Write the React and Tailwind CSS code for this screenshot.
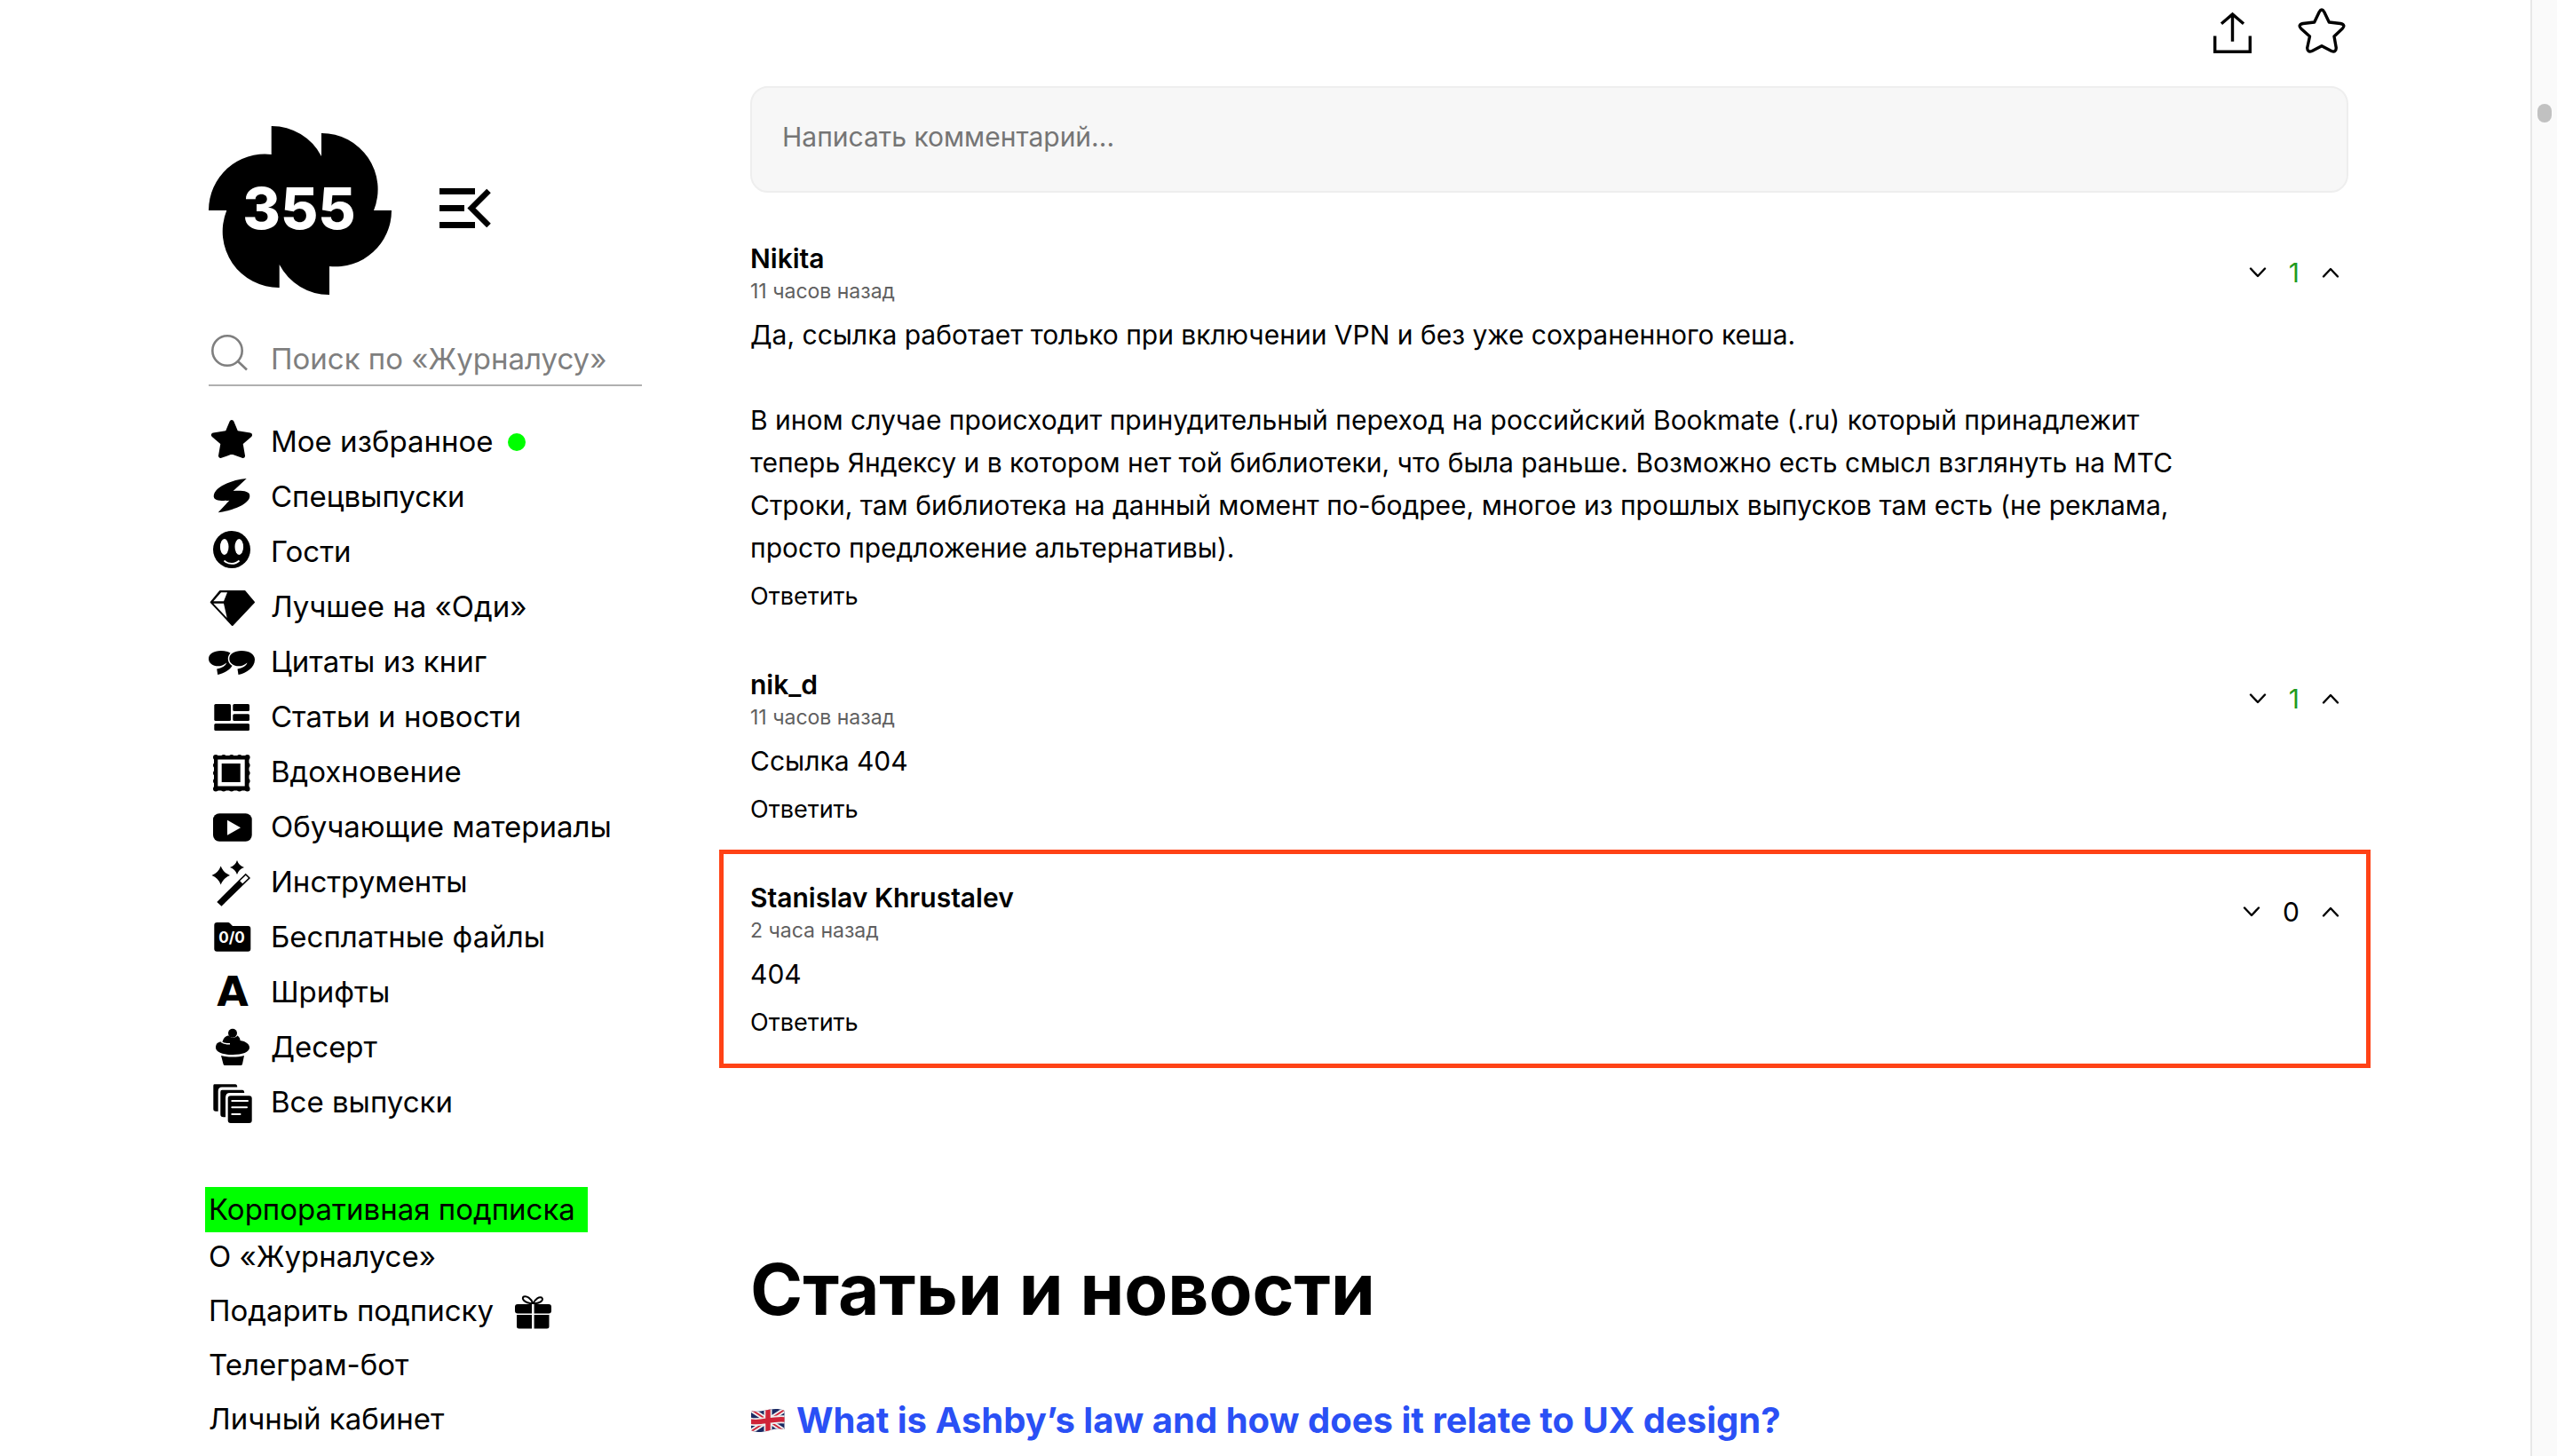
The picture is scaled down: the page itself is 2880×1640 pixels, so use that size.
import React, { useState } from "react";

const Logo = () => (
  <svg width="206" height="190" viewBox="0 0 206 190" role="img" aria-label="355">
    <path d="M70.7 0A63.3 63.3 0 0 1 127 34V8A63.3 63.3 0 0 1 186 95H206A63.3 63.3 0 0 1 136 158V190A63.3 63.3 0 0 1 79.7 156V182A63.3 63.3 0 0 1 20.3 95H0A63.3 63.3 0 0 1 70.7 32Z" />
    <text x="102" y="116" textAnchor="middle" className="fill-white text-[65px] font-extrabold">
      355
    </text>
  </svg>
);

const MenuIcon = () => (
  <svg width="58" height="52" viewBox="0 0 58 52">
    <path d="M0 1H40V8H0ZM0 20H28V27H0ZM0 39H40V46H0Z" />
    <path d="M55.5 4L36 23.5L55.5 43" fill="none" stroke="#000" strokeWidth="6.5" />
  </svg>
);

const SearchIcon = () => (
  <svg width="44" height="44" viewBox="0 0 44 44" fill="none" stroke="#7f7f7f" strokeWidth="2.6">
    <circle cx="21" cy="21" r="16.7" />
    <path d="M33 33L43 42.5" />
  </svg>
);

const ShareIcon = () => (
  <svg width="44" height="64" viewBox="0 0 44 64" fill="none" stroke="#000" strokeWidth="3.4">
    <path d="M21.5 16V46.7M9 26.7L21.5 16L34 26.7M1.7 40.5V58.3H41.3V40.5" />
  </svg>
);

const StarIcon = () => (
  <svg
    width="54"
    height="64"
    viewBox="0 0 54 64"
    fill="none"
    stroke="#000"
    strokeWidth="3.4"
    strokeLinejoin="round"
  >
    <path d="M24.2 13.5Q27 8.5 29.8 13.5L35.3 25L48 26.5Q54.5 28 50 32.5L41 41L43.3 54Q43 59.5 38 57.5L27 51.7L16 57.5Q11 59.5 10.7 54L13.5 41L4 32.5Q-.5 28 6 26.5L18.7 25Z" />
  </svg>
);

const GiftIcon = () => (
  <svg width="42" height="54" viewBox="0 0 42 54">
    <path
      d="M20.5 19.5C18 13 13 10.5 10 11.5C7 13 9.5 18.5 20.5 19.5C23 13.5 27.5 11.5 30 12.5C32.5 14.5 30.5 19 20.5 19.5"
      fill="none"
      stroke="#000"
      strokeWidth="2"
    />
    <rect y="20" width="41" height="10.5" rx="3" />
    <path d="M2 32H38.5V45Q38.5 47.5 36 47.5H4.5Q2 47.5 2 45Z" />
    <path d="M20.3 20V48" stroke="#fff" strokeWidth="2.6" />
  </svg>
);

const Flag = () => (
  <svg width="40" height="28" viewBox="0 0 40 28">
    <clipPath id="flag">
      <path d="M1 3C10 6 20 0 31 1Q36 1.5 38.5 3V24C28 21 20 27 9 27Q4 27 1 25Z" />
    </clipPath>
    <g clipPath="url(#flag)">
      <rect width="40" height="28" fill="#1b2a63" />
      <path d="M0 1L40 27M0 27L40 1" stroke="#eee" strokeWidth="5.5" />
      <path d="M0 1L40 27M0 27L40 1" stroke="#cf2338" strokeWidth="1.8" />
      <path d="M20 0V28M0 15C12 18 24 11 40 13" fill="none" stroke="#eee" strokeWidth="9" />
      <path d="M20 0V28M0 15C12 18 24 11 40 13" fill="none" stroke="#cf2338" strokeWidth="5.5" />
    </g>
  </svg>
);

const quote =
  "M37 18C46 18 52 22 52 28C52 37 42 43.5 33.5 45L32.5 38.5C38 37.5 42.5 35 43.5 31.5C40 34.5 37 35.3 34 35.3C28 35.3 23.3 32 23.3 27C23.3 21.5 29 18 37 18Z";

const navItems = [
  {
    label: "Мое избранное",
    isNew: true,
    icon: (
      <path
        d="M26 8.5L31 20.5L46.5 23L36 32L38.5 46.5L26 42L13.5 46.5L16 32L5.5 23L21 20.5Z"
        stroke="#000"
        strokeWidth="5"
        strokeLinejoin="round"
      />
    ),
  },
  {
    label: "Спецвыпуски",
    icon: (
      <path d="M42.7 10L27.7 24C38 23.5 46.3 24 46.3 29.5C46.3 39 27 46 10.7 48.3L23.3 34.7C14 35.5 5.7 35 5.7 30C5.7 20 25 11.5 42.7 10Z" />
    ),
  },
  {
    label: "Гости",
    icon: (
      <>
        <circle cx="26" cy="28" r="21" />
        <ellipse cx="17.7" cy="25" rx="4.8" ry="9" fill="#fff" />
        <ellipse cx="34.3" cy="25" rx="4.8" ry="9" fill="#fff" />
        <path d="M17.5 40.5C22 45 30 45 34.5 40.5" fill="none" stroke="#fff" strokeWidth="1.8" />
      </>
    ),
  },
  {
    label: "Лучшее на «Оди»",
    icon: (
      <>
        <path
          d="M2.7 25.3L13 13H40.5L51 25.3L26.7 51Z"
          stroke="#000"
          strokeWidth="2"
          strokeLinejoin="round"
        />
        <path d="M14 14.3H21L17 24.3H5.3ZM5.3 26.7H17L20.7 43Z" fill="#fff" />
      </>
    ),
  },
  {
    label: "Цитаты из книг",
    icon: (
      <>
        <path d={quote} transform="translate(-23.3 0)" />
        <path d={quote} stroke="#fff" strokeWidth="3" className="[paint-order:stroke]" />
      </>
    ),
  },
  {
    label: "Статьи и новости",
    icon: (
      <>
        <rect x="6.3" y="16" width="18.7" height="19" rx="1.5" />
        <rect x="27.3" y="16" width="18.7" height="8" rx="1.5" />
        <rect x="27.3" y="27.3" width="18.7" height="7.7" rx="1.5" />
        <rect x="6.3" y="38" width="39.7" height="8" rx="1.5" />
      </>
    ),
  },
  {
    label: "Вдохновение",
    icon: (
      <>
        <rect x="6" y="12" width="39.5" height="39.5" />
        <rect
          x="8"
          y="14"
          width="35.6"
          height="35.6"
          fill="none"
          stroke="#000"
          strokeWidth="6"
          strokeLinecap="round"
          strokeDasharray="0 8.9"
        />
        <rect x="10.3" y="16.5" width="30.4" height="30" fill="#fff" />
        <rect x="14.7" y="21" width="21" height="21" />
      </>
    ),
  },
  {
    label: "Обучающие материалы",
    icon: (
      <>
        <rect x="5" y="15.3" width="43.7" height="31.4" rx="7" />
        <path d="M21 22.7L36 31.3L21 39.7Z" fill="#fff" />
      </>
    ),
  },
  {
    label: "Инструменты",
    icon: (
      <>
        <path d="M13.7 12.5Q16.5 20 24 23Q16.5 26 13.7 33.5Q11 26 3.5 23Q11 20 13.7 12.5Z" />
        <path d="M32 6Q34 12 40 14Q34 16 32 22Q30 16 24 14Q30 12 32 6Z" />
        <path d="M41.7 20.7L47 26L14.5 57.7L9.3 53Z" />
        <path d="M41.8 23L44.8 26L38.2 32.3L35.2 29.3Z" fill="#fff" />
      </>
    ),
  },
  {
    label: "Бесплатные файлы",
    icon: (
      <>
        <path d="M9.5 14H22Q23 14 24 15L27 18H44.5Q47.3 18 47.3 21V43.7Q47.3 46.7 44.3 46.7H9.3Q6.3 46.7 6.3 43.7V17Q6.3 14 9.5 14Z" />
        <text x="26" y="37" textAnchor="middle" className="fill-white text-[17px] font-bold">
          0/0
        </text>
      </>
    ),
  },
  {
    label: "Шрифты",
    icon: (
      <text
        x="27"
        y="46"
        textAnchor="middle"
        className="font-['DejaVu_Sans',sans-serif] text-[46px] font-bold"
      >
        A
      </text>
    ),
  },
  {
    label: "Десерт",
    icon: (
      <>
        <path d="M8 31C8 26 11 24 15.5 24.5C17 19 20 17.5 23 17.5C25 20.5 30 20.5 32.5 17.5C34.5 19 35.5 20.5 35.5 23C42 24 46 27 46 31C46 36 38 39 27 39C16 39 8 36 8 31Z" />
        <path d="M14 24.5C17 26.5 20 27 24 26.7" fill="none" stroke="#fff" strokeWidth="1.5" />
        <circle cx="27" cy="14.7" r="5" />
        <path d="M14 40C22 42 32 42 40 40L38 49.5Q37.7 51 36 51H18.5Q16.7 51 16.5 49.5Z" />
      </>
    ),
  },
  {
    label: "Все выпуски",
    icon: (
      <g stroke="#fff" strokeWidth="2">
        <path d="M6.3 9.3H30Q33.3 9.3 33.3 14.5H15Q11.7 14.5 11.7 18V41.7H8Q4.3 41.7 4.3 38V12Q4.3 9.3 6.3 9.3Z" />
        <path d="M15 15.7H38Q41.3 15.7 41.3 21H24Q20 21 20 25V48.3H16.5Q12.3 48.3 12.3 44V19Q12.3 15.7 15 15.7Z" />
        <rect x="20.7" y="22.3" width="29" height="32.7" rx="4" />
        <path d="M26.3 29H44M26.3 36.3H43M26.3 44H35.5" strokeLinecap="round" />
      </g>
    ),
  },
];

const comments = [
  {
    author: "Nikita",
    time: "11 часов назад",
    votes: 1,
    text: "Да, ссылка работает только при включении VPN и без уже сохраненного кеша.\n\nВ ином случае происходит принудительный переход на российский Bookmate (.ru) который принадлежит теперь Яндексу и в котором нет той библиотеки, что была раньше. Возможно есть смысл взглянуть на МТС Строки, там библиотека на данный момент по-бодрее, многое из прошлых выпусков там есть (не реклама, просто предложение альтернативы).",
  },
  { author: "nik_d", time: "11 часов назад", votes: 1, text: "Ссылка 404" },
  {
    author: "Stanislav Khrustalev",
    time: "2 часа назад",
    votes: 0,
    text: "404",
    highlighted: true,
  },
];

const Chevron = ({ up }) => (
  <svg
    width="20"
    height="14"
    viewBox="0 0 20 14"
    fill="none"
    stroke="#000"
    strokeWidth="2.4"
    strokeLinecap="round"
    strokeLinejoin="round"
  >
    <path d={up ? "M2 11.5L10 3L18 11.5" : "M2 2.5L10 11L18 2.5"} />
  </svg>
);

const Comment = ({ author, time, text, votes, highlighted }) => {
  const [score, setScore] = useState(votes);

  return (
    <li
      className={`flex justify-between items-start ${
        highlighted
          ? "-mt-[34px] -mb-[32px] -ml-[35px] -mr-[25px] border-[5px] border-[#ff4216] pt-[29px] pb-[27px] pl-[30px] pr-[20px]"
          : ""
      }`}
    >
      <div className="max-w-[1630px]">
        <h3 className="text-[30px] leading-[40px] font-semibold">{author}</h3>
        <p className="text-[23px] leading-[34px] text-[#5f6060]">{time}</p>
        <p className="mt-2 text-[30px] leading-[48px] whitespace-pre-line">{text}</p>
        <button type="button" className="mt-3 block text-[27px] leading-[38px]">
          Ответить
        </button>
      </div>
      <div className="flex h-[72px] items-center gap-[25px] pr-[10px] text-[30px]">
        <button type="button" aria-label="Минус" onClick={() => setScore(score - 1)}>
          <Chevron />
        </button>
        <span className={score > 0 ? "text-[#1f9a1f]" : ""}>{score}</span>
        <button type="button" aria-label="Плюс" onClick={() => setScore(score + 1)}>
          <Chevron up />
        </button>
      </div>
    </li>
  );
};

const Sidebar = () => (
  <aside className="w-[488px] shrink-0 pt-[142px] text-[33px]">
    <div className="flex items-center gap-[54px]">
      <a href="#">
        <Logo />
      </a>
      <button type="button" aria-label="Свернуть меню">
        <MenuIcon />
      </button>
    </div>

    <label className="mt-[42px] flex h-[61px] items-start border-b-2 border-[#b0b0b0]">
      <span className="w-[70px] shrink-0">
        <SearchIcon />
      </span>
      <input
        type="search"
        aria-label="Поиск"
        placeholder="Поиск по «Журналусу»"
        className="h-[59px] w-full outline-none placeholder:text-[#7f7f7f]"
      />
    </label>

    <nav className="mt-8">
      <ul>
        {navItems.map((item) => (
          <li key={item.label}>
            <a href="#" className="flex h-[62px] items-center">
              <span className="w-[70px]">
                <svg width="54" height="62" viewBox="0 0 54 62">
                  {item.icon}
                </svg>
              </span>
              {item.label}
              {item.isNew && <span className="ml-4 size-5 rounded-full bg-[#00ff00]" />}
            </a>
          </li>
        ))}
      </ul>

      <a
        href="#"
        className="mt-16 -ml-1 block w-fit bg-[#00ff00] pl-1 pr-[14px] leading-[51px]"
      >
        Корпоративная подписка
      </a>
      <ul className="flex flex-col gap-[7px] leading-[54px]">
        <li>
          <a href="#">О «Журналусе»</a>
        </li>
        <li>
          <a href="#" className="flex items-center gap-6">
            Подарить подписку
            <GiftIcon />
          </a>
        </li>
        <li>
          <a href="#">Телеграм-бот</a>
        </li>
        <li>
          <a href="#">Личный кабинет</a>
        </li>
      </ul>
    </nav>
  </aside>
);

const App = () => {
  return (
    <div className="flex min-h-screen bg-white font-[Inter,sans-serif] text-black">
      <div className="flex flex-1 gap-[122px] pl-[235px] pr-[205px]">
        <Sidebar />

        <main className="min-w-0 flex-1">
          <div className="flex h-[97px] items-start justify-end gap-[51px] pr-[3px]">
            <button type="button" aria-label="Поделиться">
              <ShareIcon />
            </button>
            <button type="button" aria-label="В избранное">
              <StarIcon />
            </button>
          </div>

          <input
            type="text"
            aria-label="Комментарий"
            placeholder="Написать комментарий..."
            className="block h-[120px] w-full rounded-[20px] border-2 border-[#eeeeee] bg-[#f7f7f7] px-[34px] pb-[6px] text-[30px] outline-none placeholder:text-[#757575]"
          />

          <ul className="mt-[54px] flex flex-col gap-[60px]">
            {comments.map((comment) => (
              <Comment key={comment.author} {...comment} />
            ))}
          </ul>

          <h2 className="mt-[233px] text-[80px] leading-[96px] font-bold">Статьи и новости</h2>
          <a
            href="#"
            className="mt-[76px] flex items-center gap-3 text-[40px] leading-[48px] font-bold text-[#2a50f5]"
          >
            <Flag />
            What is Ashby’s law and how does it relate to UX design?
          </a>
        </main>
      </div>

      {/* Scroll track */}
      <div className="w-[30px] shrink-0 border-l-2 border-[#e8e8e8] bg-[#fafafa] pt-[117px]">
        <div className="mx-auto h-[21px] w-4 rounded-full bg-[#c1c1c1]" />
      </div>
    </div>
  );
};

export default App;
